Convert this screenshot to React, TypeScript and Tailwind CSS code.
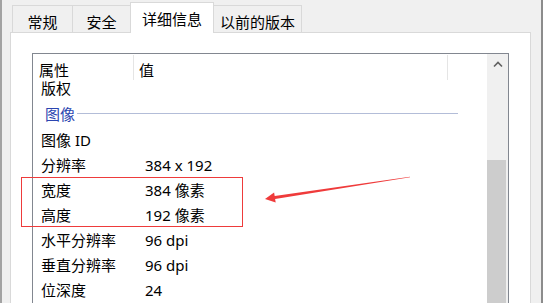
import React from 'react';

const rows: [string, string][] = [
  ['图像 ID', ''],
  ['分辨率', '384 x 192'],
  ['宽度', '384 像素'],
  ['高度', '192 像素'],
  ['水平分辨率', '96 dpi'],
  ['垂直分辨率', '96 dpi'],
  ['位深度', '24'],
];

function Tab({ label, width, active }: { label: string; width: string; active?: boolean }) {
  if (active) {
    return (
      <div
        className={`relative z-10 -ml-px -mb-px h-[31px] ${width} flex justify-center pt-[6px] bg-white border-x border-t border-[#d9d9d9]`}
      >
        <span className="leading-[20px]">{label}</span>
      </div>
    );
  }
  return (
    <div className={`-ml-px first:ml-0 h-[27px] ${width} flex justify-center pt-[6px] bg-[#f0f0f0] border-x border-t border-[#d9d9d9]`}>
      <span className="leading-[20px]">{label}</span>
    </div>
  );
}

export default function App() {
  return (
    <div className="relative w-[543px] h-[303px] overflow-hidden bg-[#f0f0f0] border-l-2 border-l-[#a3a3a3] border-r-2 border-r-[#8c8c8c] font-['Noto_Sans','Noto_Sans_CJK_SC',sans-serif] text-[15px] text-black">
      {/* Tabs */}
      <div className="flex items-end h-[32px] pl-[10px]">
        <Tab label="常规" width="w-[61px]" />
        <Tab label="安全" width="w-[59px]" />
        <Tab label="详细信息" width="w-[84px]" active />
        <Tab label="以前的版本" width="w-[89px]" />
      </div>

      {/* Panel */}
      <div className="ml-[8px] w-[521px] h-[300px] bg-white border border-[#d9d9d9] pt-[20px] px-[21px]">
        <div className="h-[270px] flex border border-[#828790]">
          <div className="flex-1 flex flex-col overflow-hidden">
            {/* Header */}
            <div className="h-[26px] flex shrink-0">
              <div className="w-[101px] mt-px border-r border-[#e5e5e5] pl-[6px] pt-[5px] leading-[20px]">属性</div>
              <div className="w-[314px] mt-px border-r border-[#e5e5e5] pl-[5px] pt-[5px] leading-[20px]">值</div>
            </div>

            {/* Body */}
            <div className="flex-1 overflow-hidden">
              <div className="-mt-[5px]">
                <div className="h-[25px] flex items-center pl-[8px] leading-[20px]">版权</div>
                <div className="h-[27px] flex items-center pl-[12px]">
                  <span className="text-[#2b45b0] leading-[20px]">图像</span>
                  <div className="flex-1 ml-[2px] mr-[29px] h-px bg-[#b3bdd8]" />
                </div>
                {rows.map(([k, v]) => (
                  <div key={k} className="h-[25px] flex items-center pl-[8px] leading-[20px]">
                    <span className="w-[104px] shrink-0">{k}</span>
                    <span>{v}</span>
                  </div>
                ))}
              </div>
            </div>
          </div>

          {/* Scrollbar */}
          <div className="w-[21px] bg-[#f0f0f0] flex flex-col overflow-hidden">
            <div className="h-[21px] shrink-0 flex items-center justify-center">
              <svg width="10" height="7" viewBox="0 0 10 7">
                <path d="M1 5.5 L5 1.5 L9 5.5" fill="none" stroke="#606060" strokeWidth="1.6" />
              </svg>
            </div>
            <div className="h-[85px] shrink-0" />
            <div className="w-[19px] h-[200px] shrink-0 bg-[#cdcdcd]" />
          </div>
        </div>
      </div>

      {/* Annotation: highlight box */}
      <div className="absolute left-[19px] top-[177px] w-[222px] h-[50px] border border-[#ee3b3b]" />

      {/* Annotation: arrow */}
      <svg className="absolute -left-[2px] top-0 w-[543px] h-[303px] pointer-events-none" viewBox="0 0 543 303">
        <polygon
          points="410,176.7 274.7,195.9 274.1,192.4 265,199 275.7,202.6 275.1,199.1 410,177.3"
          fill="#ef3b3b"
        />
      </svg>
    </div>
  );
}
